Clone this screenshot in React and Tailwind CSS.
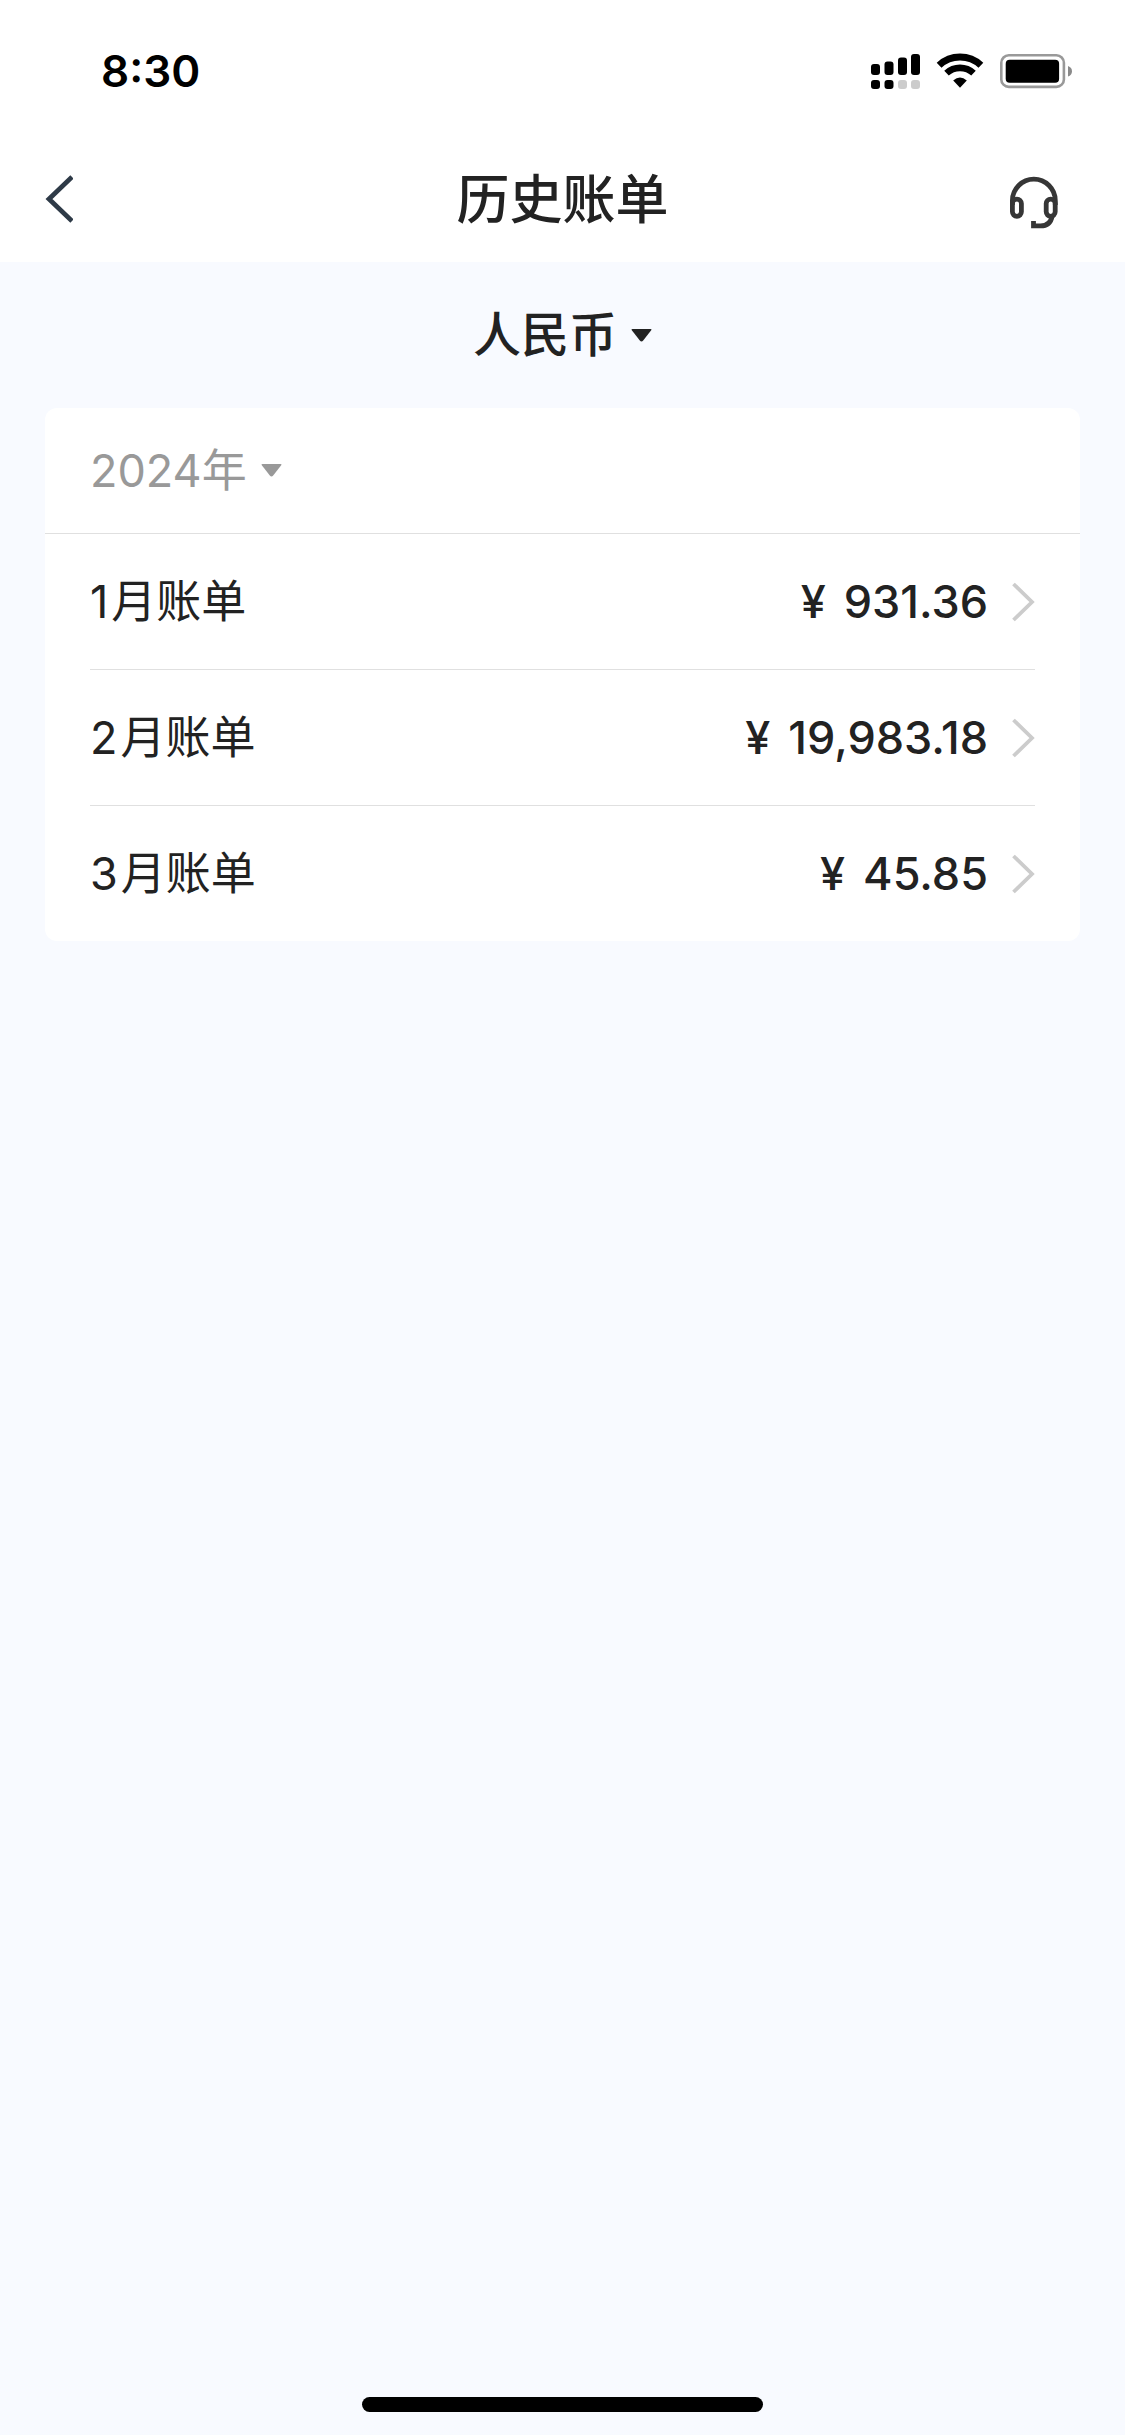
import React from "react";

const bills = [
  { month: "1", amount: "931.36" },
  { month: "2", amount: "19,983.18" },
  { month: "3", amount: "45.85" },
];

function SignalIcon() {
  return (
    <svg width="49" height="36" viewBox="0 0 49 36" aria-hidden="true">
      <rect x="0" y="11" width="9" height="11" rx="3" />
      <rect x="13.5" y="8.5" width="9" height="13.5" rx="3" />
      <rect x="27" y="4.5" width="9" height="17.5" rx="3" />
      <rect x="40" y="1" width="9" height="21" rx="3" />
      <rect x="0" y="27" width="9" height="9" rx="3" />
      <rect x="13.5" y="27" width="9" height="9" rx="3" />
      <rect x="27" y="27" width="9" height="9" rx="3" fill="#cccccc" />
      <rect x="40" y="27" width="9" height="9" rx="3" fill="#cccccc" />
    </svg>
  );
}

function WifiIcon() {
  return (
    <svg width="48" height="36" viewBox="0 0 48 36" aria-hidden="true">
      <g fill="none" stroke="#000">
        <path d="M3.1 12.3A30.7 30.7 0 0 1 44.9 12.3" strokeWidth="7" />
        <path d="M10.5 20.2A19.8 19.8 0 0 1 37.5 20.2" strokeWidth="6.6" />
      </g>
      <path d="M24 34.7L17.2 27.6Q24 21.4 30.8 27.6Z" />
    </svg>
  );
}

function BatteryIcon() {
  return (
    <svg width="72" height="36" viewBox="0 0 72 36" aria-hidden="true">
      <rect x="1.3" y="2.3" width="62.6" height="31.6" rx="7.5" fill="none" stroke="#999" strokeWidth="2.6" />
      <rect x="5.7" y="6.7" width="53.4" height="23" rx="4" />
      <path d="M68 13Q72 14.5 72 18.2Q72 22 68 23.5Z" fill="#8a8a8a" />
    </svg>
  );
}

function HeadsetIcon() {
  return (
    <svg width="52" height="54" viewBox="0 0 52 54" fill="none" stroke="#363636" strokeWidth="4.8" aria-hidden="true">
      <path d="M4.4 29V24.6A21.4 21.4 0 0 1 47.3 24.6V29" />
      <rect x="4.4" y="23.1" width="9" height="17.2" rx="4.5" />
      <rect x="38.2" y="23.1" width="9" height="17.2" rx="4.5" />
      <path d="M44.2 40Q42.4 49.9 32.5 49.9H25.5V45" />
    </svg>
  );
}

function BackIcon() {
  return (
    <svg width="28" height="48" viewBox="0 0 28 48" fill="none" stroke="#2e3a47" strokeWidth="4.8" aria-hidden="true">
      <path d="M27 2L4 24L27 46" />
    </svg>
  );
}

function ChevronIcon() {
  return (
    <svg width="23" height="40" viewBox="0 0 23 40" fill="none" stroke="#cccccc" strokeWidth="3.8" aria-hidden="true">
      <path d="M1.5 2L20 20L1.5 38" />
    </svg>
  );
}

function Caret({ className }) {
  return (
    <svg width="21" height="13" viewBox="0 0 21 13" fill="currentColor" className={className} aria-hidden="true">
      <path d="M1.5 0H19.5Q21.2 0 20 1.6L12.2 11.6Q10.5 13.6 8.8 11.6L1 1.6Q-0.2 0 1.5 0Z" />
    </svg>
  );
}

function Dropdown({ label, options, className }) {
  return (
    <div className={"relative flex items-center " + className}>
      <select
        aria-label={label}
        className="appearance-none bg-transparent pr-[35px] outline-none field-sizing-content"
      >
        {options.map((o) => (
          <option key={o}>{o}</option>
        ))}
      </select>
      <Caret className="pointer-events-none absolute right-0" />
    </div>
  );
}

export default function App() {
  return (
    <div className="flex min-h-screen flex-col bg-[#f8faff] font-[Inter,'Noto_Sans_CJK_SC',sans-serif] text-[#222222]">
      <div className="bg-white">
        <div className="flex h-[136px] items-center justify-between pt-1.5 pr-[53px] pl-[101px] text-black">
          <time className="text-[44px] leading-none font-semibold">8:30</time>
          <div className="flex items-center gap-4">
            <SignalIcon />
            <WifiIcon />
            <BatteryIcon />
          </div>
        </div>
        <header className="grid h-[126px] grid-cols-[1fr_auto_1fr] items-center px-[45px]">
          <button type="button" aria-label="返回" className="justify-self-start">
            <BackIcon />
          </button>
          <h1 className="pt-0.5 text-[53px] leading-none font-medium">历史账单</h1>
          <button type="button" aria-label="客服" className="justify-self-end pt-2 pr-5">
            <HeadsetIcon />
          </button>
        </header>
      </div>

      <main className="flex-1 px-[45px]">
        <div className="flex h-[146px] items-center justify-center">
          <Dropdown label="币种" options={["人民币"]} className="text-[48px] font-medium" />
        </div>
        <section className="rounded-xl bg-white">
          <div className="flex h-[126px] items-center border-b border-[#e0e0e0] px-[45px]">
            <Dropdown label="年份" options={["2024年"]} className="text-[45px] text-[#999999]" />
          </div>
          <ul className="px-[45px]">
            {bills.map((b) => (
              <li key={b.month} className="border-b border-[#e0e0e0] last:border-b-0">
                <a href="#" className="flex h-[135px] items-center text-[45px]">
                  <span className="flex flex-1 gap-[3px]">
                    <span>{b.month}</span>
                    <span>月账单</span>
                  </span>
                  <span className="mr-[24px] flex gap-[18px] font-medium">
                    <span>¥</span>
                    <span>{b.amount}</span>
                  </span>
                  <ChevronIcon />
                </a>
              </li>
            ))}
          </ul>
        </section>
      </main>

      <div className="flex justify-center pb-[23px]">
        <div className="h-[15px] w-[401px] rounded-full bg-black" />
      </div>
    </div>
  );
}
